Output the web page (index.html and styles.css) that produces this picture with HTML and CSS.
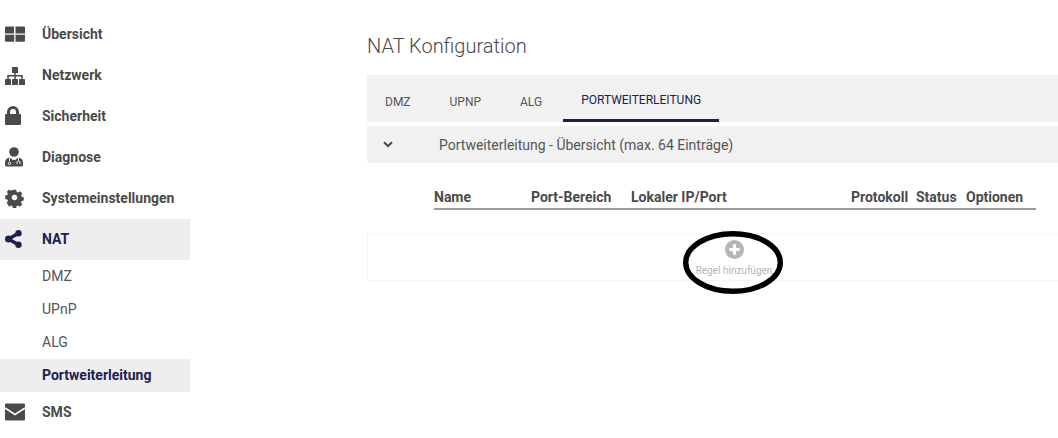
FILE: index.html
```html
<!DOCTYPE html>
<html lang="de">
<head>
  <meta charset="UTF-8">
  <title>NAT Konfiguration</title>
  <link rel="stylesheet" href="styles.css">
</head>
<body>
  <nav class="sidebar">
    <a class="nav-item">
      <svg class="nav-icon" viewBox="0 0 20 20"><path d="M0 3.500a1 1 0 0 1 1-1h8v7H0zM10.500 2.500H19a1 1 0 0 1 1 1v6h-9.500zM0 10.800h9.200v7H1a1 1 0 0 1-1-1zM10.500 10.800H20v6a1 1 0 0 1-1 1h-8.500z"/></svg>
      Übersicht
    </a>
    <a class="nav-item">
      <svg class="nav-icon" viewBox="0 0 20 20"><rect x="7" y="2" width="6" height="6" rx=".6"/><rect x="0" y="14" width="6" height="6" rx=".6"/><rect x="7" y="14" width="6" height="6" rx=".6"/><rect x="14" y="14" width="6" height="6" rx=".6"/><path d="M9.250 8h1.500v2h7v4h-1.500v-2.500h-5.500V14h-1.500v-2.500h-5.500V14h-1.500v-4h7z"/></svg>
      Netzwerk
    </a>
    <a class="nav-item">
      <svg class="nav-icon" viewBox="0 0 20 20"><path d="M2 8V6a6 6 0 0 1 12 0v2h1a1 1 0 0 1 1 1v9a1 1 0 0 1-1 1H1a1 1 0 0 1-1-1V9a1 1 0 0 1 1-1zm3 0h6V6a3 3 0 0 0-6 0z"/></svg>
      Sicherheit
    </a>
    <a class="nav-item">
      <svg class="nav-icon" viewBox="0 0 20 20"><circle cx="9" cy="5" r="4.800"/><path d="M4.500 10.500c-3 .5-4.500 2.500-4.500 5V18a1.500 1.500 0 0 0 1.500 1.500h15A1.500 1.500 0 0 0 18 18v-2.500c0-2.500-1.500-4.500-4.500-5L10 13H8z"/><path d="M4.500 11v3M13.500 11v2.500M12 17v-1.500a1.500 1.500 0 0 1 3 0V17M4.500 15.200a1.200 1.200 0 1 0 .01 0" fill="none" stroke="#fff" stroke-width="1"/></svg>
      Diagnose
    </a>
    <a class="nav-item">
      <svg class="nav-icon" viewBox="0 0 20 20"><path fill-rule="evenodd" d="M8 .5h4l.6 2.600 1.700.7 2.300-1.400 2.800 2.800-1.400 2.300.7 1.700 2.600.6v4l-2.600.6-.7 1.700 1.400 2.300-2.800 2.800-2.300-1.400-1.700.7-.6 2.600H8l-.6-2.600-1.700-.7-2.300 1.400L.6 16.300 2 14l-.7-1.700-2.600-.6v-4l2.600-.6.700-1.700L.6 3.100 3.400.3l2.300 1.400 1.700-.7zM10 6.600a3.400 3.400 0 1 0 .01 0z" transform="translate(1.300 1.300) scale(.82)"/></svg>
      Systemeinstellungen
    </a>
    <a class="nav-item nav-item-active">
      <svg class="nav-icon" viewBox="0 0 20 20"><circle cx="3.500" cy="10" r="3.500"/><circle cx="13.500" cy="4.200" r="3.200"/><circle cx="13.500" cy="15.800" r="3.200"/><path d="M3.500 10 13.500 4.200M3.500 10 13.500 15.800" stroke="currentColor" stroke-width="3.500"/></svg>
      NAT
    </a>
    <a class="sub-item">DMZ</a>
    <a class="sub-item">UPnP</a>
    <a class="sub-item">ALG</a>
    <a class="sub-item sub-item-active">Portweiterleitung</a>
    <a class="nav-item">
      <svg class="nav-icon" viewBox="0 0 20 20"><rect y="1.500" width="20" height="17" rx="1"/><path d="M0 6l10 6.500L20 6" fill="none" stroke="#fff" stroke-width="1.500"/></svg>
      SMS
    </a>
  </nav>

  <main class="content">
    <h1 class="page-title">NAT Konfiguration</h1>
    <div class="tabs">
      <a class="tab">DMZ</a>
      <a class="tab">UPNP</a>
      <a class="tab">ALG</a>
      <a class="tab tab-active">PORTWEITERLEITUNG</a>
    </div>
    <div class="panel-head">
      <svg class="chevron" viewBox="0 0 10 7"><path d="M1 1.200 5 5l4-3.800" fill="none" stroke="currentColor" stroke-width="2"/></svg>
      <span>Portweiterleitung - Übersicht (max. 64 Einträge)</span>
    </div>
    <div class="rule-head">
      <span>Name</span>
      <span>Port-Bereich</span>
      <span>Lokaler IP/Port</span>
      <span>Protokoll</span>
      <span>Status</span>
      <span>Optionen</span>
    </div>
    <div class="add-rule">
      <div class="add-button">
        <svg class="add-icon" viewBox="0 0 20 20"><path fill-rule="evenodd" d="M10 0a10 10 0 1 1 0 20 10 10 0 0 1 0-20zM8.300 4.500v3.800H4.500v3.400h3.800v3.800h3.400v-3.800h3.800V8.300h-3.800V4.500z"/></svg>
        <span>Regel hinzufügen</span>
      </div>
    </div>
  </main>

  <svg class="scribble" viewBox="0 0 104 68"><ellipse cx="52" cy="34.500" rx="47.300" ry="28.800" fill="none" stroke="#000" stroke-width="5.400"/></svg>
</body>
</html>
```

FILE: styles.css
```css
html, body {
  margin: 0;
  padding: 0;
  height: 100%;
  overflow: hidden;
}

body {
  display: flex;
  position: relative;
  background: #fff;
  font-family: Roboto, "Liberation Sans", sans-serif;
  color: #4a4a4a;
}

.sidebar {
  width: 190px;
  flex: none;
  padding-top: 13.5px;
}

.nav-item {
  display: flex;
  align-items: center;
  height: 41px;
  padding-left: 5px;
  font-size: 14px;
  font-weight: 700;
  color: #4a4a4a;
}

.nav-icon {
  width: 20px;
  height: 20px;
  margin-right: 17px;
  fill: currentColor;
  flex: none;
}

.nav-item-active {
  background: #eeeeee;
  color: #1a2253;
}

.sub-item {
  display: flex;
  align-items: center;
  height: 33px;
  padding-left: 42px;
  font-size: 14px;
  color: #555;
}

.sub-item-active {
  background: #eeeeee;
  color: #1a2253;
  font-weight: 700;
}

.content {
  flex: 1;
  margin-left: 177px;
}

.page-title {
  margin: 35px 0 17px;
  font-size: 20px;
  line-height: 23px;
  font-weight: 300;
  color: #4a4a4a;
}

.tabs {
  display: flex;
  gap: 3px;
  height: 47px;
  background: #f1f1f1;
}

.tab {
  display: flex;
  align-items: center;
  padding: 6px 18px 0;
  font-size: 12px;
  color: #555;
  box-sizing: border-box;
}

.tab-active {
  color: #1a2253;
  border-bottom: 3px solid #1a2253;
}

.panel-head {
  display: flex;
  align-items: center;
  height: 37px;
  margin-top: 4px;
  padding-left: 16px;
  background: #f1f1f1;
  border-radius: 3px;
  font-size: 14px;
  color: #555;
}

.chevron {
  width: 10px;
  height: 7px;
  margin-right: 46px;
  color: #4a4a4a;
}

.rule-head {
  display: grid;
  grid-template-columns: 97px 100px 220px 65px 50px 70px;
  width: 602px;
  margin: 25px 0 0 67px;
  padding-bottom: 2px;
  border-bottom: 2px solid #9b9b9b;
  font-size: 14px;
  line-height: 18px;
  font-weight: 700;
  color: #4a4a4a;
}

.add-rule {
  height: 46px;
  margin-top: 23px;
  border: 1px solid #f5f5f5;
  border-right: none;
  font-size: 10px;
  color: #b5b5b5;
}

.add-button {
  display: flex;
  flex-direction: column;
  align-items: center;
  width: 732px;
}

.add-icon {
  width: 19px;
  height: 19px;
  margin-top: 6px;
  margin-bottom: 6px;
  fill: #b5b5b5;
}

.scribble {
  position: absolute;
  left: 681px;
  top: 228px;
  width: 104px;
  height: 68px;
}
```
